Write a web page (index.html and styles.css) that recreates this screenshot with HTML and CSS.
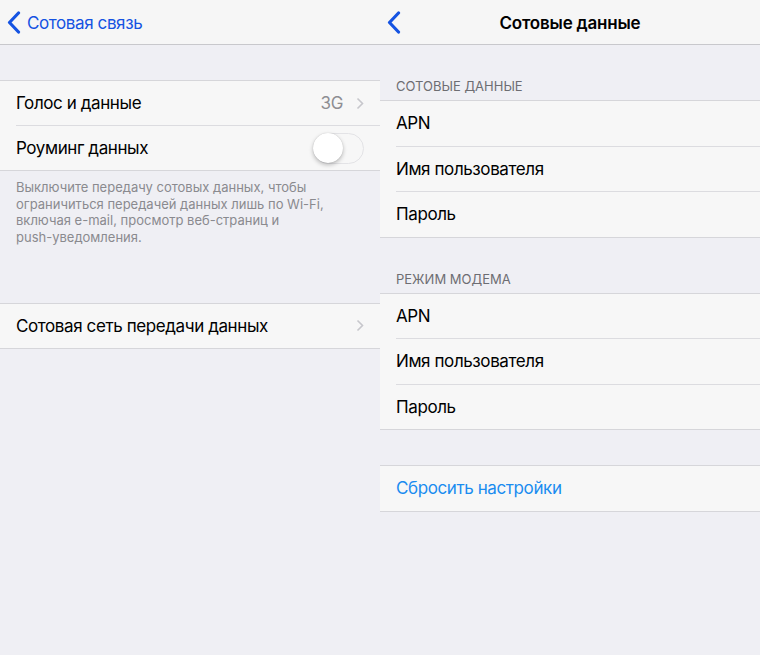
FILE: index.html
```html
<!DOCTYPE html>
<html lang="ru">
<head>
    <meta charset="UTF-8">
    <meta name="viewport" content="width=device-width, initial-scale=1.0">
    <title>Сотовые данные</title>
    <link rel="stylesheet" href="styles.css">
</head>
<body>
    <div class="screens">
        <!-- Левый экран -->
        <div class="screen left">
            <div class="navbar">
                <a class="back">
                    <svg class="back-icon" width="14" height="23" viewBox="0 0 14 23"><path d="M11.5 2 L2.5 11.5 L11.5 21" /></svg>
                    <span>Сотовая связь</span>
                </a>
            </div>

            <div class="group first">
                <div class="row">
                    <span class="label">Голос и данные</span>
                    <span class="value">3G</span>
                    <svg class="chevron" width="8" height="13" viewBox="0 0 8 13"><path d="M1.5 1.5 L6.5 6.5 L1.5 11.5" /></svg>
                </div>
                <div class="row">
                    <span class="label">Роуминг данных</span>
                    <span class="switch"><span class="knob"></span></span>
                </div>
            </div>
            <p class="footer">Выключите передачу сотовых данных, чтобы ограничиться передачей данных лишь по Wi-Fi, включая e-mail, просмотр веб-страниц и <span class="nowrap">push-уведомления.</span></p>

            <div class="group second">
                <div class="row">
                    <span class="label">Сотовая сеть передачи данных</span>
                    <svg class="chevron" width="8" height="13" viewBox="0 0 8 13"><path d="M1.5 1.5 L6.5 6.5 L1.5 11.5" /></svg>
                </div>
            </div>
        </div>

        <!-- Правый экран -->
        <div class="screen right">
            <div class="navbar">
                <a class="back">
                    <svg class="back-icon" width="14" height="23" viewBox="0 0 14 23"><path d="M11.5 2 L2.5 11.5 L11.5 21" /></svg>
                </a>
                <span class="title">Сотовые данные</span>
            </div>

            <div class="header">Сотовые данные</div>
            <div class="group">
                <div class="row"><span class="label">APN</span></div>
                <div class="row"><span class="label">Имя пользователя</span></div>
                <div class="row"><span class="label">Пароль</span></div>
            </div>

            <div class="header">Режим модема</div>
            <div class="group">
                <div class="row"><span class="label">APN</span></div>
                <div class="row"><span class="label">Имя пользователя</span></div>
                <div class="row"><span class="label">Пароль</span></div>
            </div>

            <div class="group first">
                <div class="row"><span class="label link">Сбросить настройки</span></div>
            </div>
        </div>
    </div>
</body>
</html>
```

FILE: styles.css
```css
body {
    margin: 0;
    font-family: Inter, "Noto Sans", sans-serif;
    background-color: #efeff4;
    color: #000;
}

.screens {
    display: flex;
    height: 655px;
}

.screen {
    width: 380px;
    background-color: #efeff4;
}

.navbar {
    position: relative;
    height: 44px;
    background-color: #f6f6f6;
    border-bottom: 1px solid #c8c8cc;
    display: flex;
    align-items: center;
    justify-content: center;
}

.back {
    position: absolute;
    left: 7px;
    top: 11px;
    display: flex;
    align-items: center;
    gap: 6px;
    color: #1553e2;
    font-size: 17px;
    letter-spacing: -0.4px;
}

.back span {
    padding-top: 1px;
}

.back-icon path {
    fill: none;
    stroke: #1553e2;
    stroke-width: 3.2;
    stroke-linecap: round;
    stroke-linejoin: round;
}

.title {
    font-size: 17px;
    font-weight: 600;
    letter-spacing: -0.2px;
    padding-top: 1px;
}

.group {
    background-color: #f7f7f7;
    border-top: 1px solid #d6d6da;
    border-bottom: 1px solid #d6d6da;
}

.group.first {
    margin-top: 35px;
}

.group.second {
    margin-top: 57px;
}

.row {
    height: 44.5px;
    margin-left: 16px;
    padding-right: 16px;
    display: flex;
    align-items: center;
    font-size: 17px;
    letter-spacing: -0.4px;
}

.left .row {
    height: 44px;
}

.row + .row {
    border-top: 1px solid #dcdce0;
}

.label {
    flex: 1;
}

.link {
    color: #1a8cf0;
}

.value {
    color: #8e8e93;
    margin-right: 13px;
}

.chevron path {
    fill: none;
    stroke: #c7c7cc;
    stroke-width: 1.6;
}

.switch {
    position: relative;
    width: 51px;
    height: 31px;
    box-sizing: border-box;
    border: 1.5px solid #e3e3e6;
    border-radius: 16px;
    background-color: #f7f7f7;
}

.knob {
    position: absolute;
    left: -1px;
    top: -1px;
    width: 30px;
    height: 30px;
    border-radius: 50%;
    background-color: #fff;
    box-shadow: 0 2px 4px rgba(0, 0, 0, 0.25), 0 0 1px rgba(0, 0, 0, 0.2);
}

.footer {
    margin: 0;
    padding: 8px 16px 0;
    font-size: 13px;
    line-height: 16.7px;
    color: #8a8a8f;
}

.nowrap {
    white-space: nowrap;
}

.header {
    padding: 33px 16px 6px;
    font-size: 13px;
    line-height: 16px;
    text-transform: uppercase;
    color: #6d6d72;
}
```
